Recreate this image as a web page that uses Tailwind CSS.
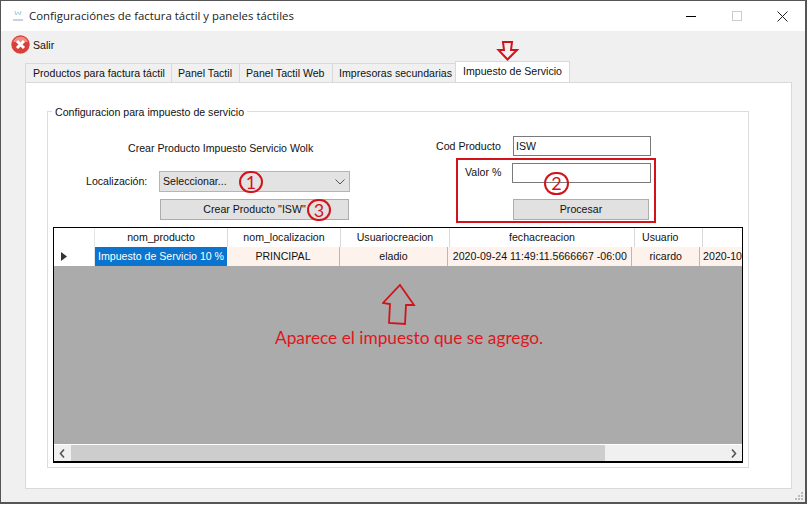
<!DOCTYPE html>
<html lang="es">
<head>
    <meta charset="UTF-8">
    <script src="https://cdn.jsdelivr.net/npm/@tailwindcss/browser@4"></script>
</head>
<body class="bg-white overflow-hidden">
    <div class="relative w-[807px] h-[504px] border border-[#555] border-r-2 border-b-2 bg-[#f0f0f0] font-['Liberation_Sans',sans-serif] text-[10.600px] text-[#111] overflow-hidden">
        <!-- title bar -->
        <div class="h-[30px] bg-white flex items-center">
            <svg class="ml-[11px] w-[12px] h-[14px]" viewBox="0 0 12 14">
                <path d="M3 2l1 4 2-3 2 3 1-4" fill="none" stroke="#a9cfe0" stroke-width="1"/>
                <path d="M1 11h10" stroke="#c5d3da" stroke-width="2"/>
            </svg>
            <span class="ml-[5px] font-['Open_Sans',sans-serif] text-[11.400px] text-[#222]">Configuraciónes de factura táctil y paneles táctiles</span>
            <div class="ml-auto flex items-center">
                <div class="w-[10px] h-px bg-black mr-[36px]"></div>
                <div class="w-[10px] h-[10px] border border-[#ccc] mr-[35px]"></div>
                <svg class="w-[11px] h-[11px] mr-[17px]" viewBox="0 0 11 11"><path d="M.5.5l10 10M10.5.5l-10 10" stroke="#222" stroke-width="1"/></svg>
            </div>
        </div>
        <!-- toolbar -->
        <div class="h-[27px] flex items-center pl-[10px]">
            <svg class="w-[19px] h-[19px]" viewBox="0 0 19 19">
                <circle cx="9.5" cy="9.5" r="9.2" fill="#d8413a"/>
                <path d="M2 7a8 8 0 0 1 15 0z" fill="#ee8d84"/>
                <path d="M6 6l7 7M13 6l-7 7" stroke="#fff" stroke-width="3"/>
            </svg>
            <span class="ml-[3px] pt-[2px]">Salir</span>
        </div>
        <!-- tabs -->
        <div class="flex items-end ml-[24px] mt-[5px] h-[19px] relative z-10">
            <div class="h-[19px] px-[7px] pt-[2px] w-[147px] bg-[#f0f0f0] border border-[#d9d9d9] border-b-0 flex items-center whitespace-nowrap">Productos para factura táctil</div>
            <div class="h-[19px] w-[68px] pl-[6px] pt-[2px] border border-l-0 border-[#d9d9d9] border-b-0 flex items-center whitespace-nowrap">Panel Tactil</div>
            <div class="h-[19px] w-[93px] pl-[6px] pt-[2px] border border-l-0 border-[#d9d9d9] border-b-0 flex items-center whitespace-nowrap">Panel Tactil Web</div>
            <div class="h-[19px] w-[123px] pl-[6px] pt-[2px] border border-l-0 border-[#d9d9d9] border-b-0 flex items-center whitespace-nowrap">Impresoras secundarias</div>
            <div class="h-[21px] w-[115px] -ml-px pl-[7px] pb-[1px] bg-white border border-[#d9d9d9] border-b-0 flex items-center whitespace-nowrap">Impuesto de Servicio</div>
        </div>
        <!-- tab panel -->
        <div class="ml-[24px] w-[767px] h-[407px] bg-white border border-[#d9d9d9] pt-[28px] pl-[21px]">
            <div class="relative w-[702px] h-[357px] border border-[#dcdcdc] pl-[4px]">
                <span class="absolute left-[4px] -top-[7px] bg-white px-[3px]">Configuracion para impuesto de servicio</span>
                <div class="flex h-[115px]">
                    <!-- left column -->
                    <div class="w-[298px] shrink-0 pt-[29px]">
                        <div class="pl-[76px] h-[14px] leading-[14px] whitespace-nowrap">Crear Producto Impuesto Servicio Wolk</div>
                        <div class="flex items-center mt-[16px]">
                            <span class="pl-[34px] w-[107px] whitespace-nowrap">Localización:</span>
                            <div class="w-[191px] h-[21px] bg-[#e3e3e3] border border-[#b5b5b5] flex items-center justify-between pl-[3px] pr-[4px]">
                                <span>Seleccionar...</span>
                                <svg class="w-[10px] h-[6px]" viewBox="0 0 10 6"><path d="M.5.5L5 5 9.5.5" fill="none" stroke="#555" stroke-width="1"/></svg>
                            </div>
                        </div>
                        <div class="ml-[108px] mt-[7px] w-[189px] h-[21px] bg-[#e1e1e1] border border-[#adadad] flex items-center justify-center">Crear Producto "ISW"</div>
                    </div>
                    <!-- right column -->
                    <div class="ml-[86px] pt-[24px] w-[220px] relative">
                        <div class="flex items-center h-[20px]">
                            <span class="w-[77px] pt-[1px] whitespace-nowrap">Cod Producto</span>
                            <div class="w-[138px] h-[20px] border border-[#7a7a7a] bg-white pl-[2px] leading-[18px]">ISW</div>
                        </div>
                        <div class="ml-[20px] mt-[2px] w-[200px] h-[65px] border-2 border-[#d3131b] relative pt-[3px]">
                            <div class="flex">
                                <span class="pl-[7px] w-[54px] pt-[2px] whitespace-nowrap">Valor %</span>
                                <div class="w-[139px] h-[20px] border border-[#7a7a7a] bg-white"></div>
                            </div>
                            <div class="ml-[55px] mt-[16px] w-[136px] h-[21px] bg-[#e1e1e1] border border-[#adadad] flex items-center justify-center">Procesar</div>
                        </div>
                    </div>
                </div>
                <!-- data grid -->
                <div class="ml-[1px] w-[690px] h-[236px] border border-b-2 border-black bg-[#ababab] flex flex-col overflow-hidden">
                    <div class="flex h-[19px] bg-white shrink-0 whitespace-nowrap">
                        <div class="w-[41px] border-r border-[#e5e5e5]"></div>
                        <div class="w-[133px] border-r border-[#d9d9d9] flex items-center justify-center">nom_producto</div>
                        <div class="w-[113px] border-r border-[#d9d9d9] flex items-center justify-center">nom_localizacion</div>
                        <div class="w-[109px] border-r border-[#d9d9d9] flex items-center justify-center">Usuariocreacion</div>
                        <div class="w-[185px] border-r border-[#d9d9d9] flex items-center justify-center">fechacreacion</div>
                        <div class="w-[68px] border-r border-[#d9d9d9] pl-[7px] flex items-center">Usuario</div>
                    </div>
                    <div class="flex h-[19px] shrink-0 whitespace-nowrap bg-[#fdf3ec] overflow-hidden">
                        <div class="w-[41px] bg-white flex items-center pl-[7px] border-r border-[#e5e5e5]">
                            <svg class="w-[6px] h-[9px]" viewBox="0 0 6 9"><path d="M0 0l6 4.5L0 9z" fill="#333"/></svg>
                        </div>
                        <div class="w-[133px] bg-[#0a74cf] text-white flex items-center justify-center">Impuesto de Servicio 10 %</div>
                        <div class="w-[113px] border-r border-[#b8b8b8] flex items-center justify-center">PRINCIPAL</div>
                        <div class="w-[109px] border-r border-[#b8b8b8] flex items-center justify-center">eladio</div>
                        <div class="w-[185px] border-r border-[#b8b8b8] flex items-center justify-center">2020-09-24 11:49:11.5666667 -06:00</div>
                        <div class="w-[68px] border-r border-[#b8b8b8] flex items-center justify-center">ricardo</div>
                        <div class="pl-[3px] flex items-center">2020-10</div>
                    </div>
                    <div class="flex-1"></div>
                    <!-- scrollbar -->
                    <div class="h-[17px] shrink-0 bg-[#f0f0f0] border-t border-white flex items-center relative">
                        <svg class="absolute left-[5px] w-[6px] h-[9px]" viewBox="0 0 6 9"><path d="M5 .5L1.5 4.5 5 8.5" fill="none" stroke="#555" stroke-width="1.6"/></svg>
                        <div class="ml-[17px] w-[534px] h-[16px] bg-[#cdcdcd]"></div>
                        <svg class="absolute right-[5px] w-[6px] h-[9px]" viewBox="0 0 6 9"><path d="M1 .5L4.5 4.5 1 8.5" fill="none" stroke="#555" stroke-width="1.6"/></svg>
                    </div>
                </div>
            </div>
        </div>
        <!-- resize grip -->
        <svg class="absolute right-[1px] bottom-[1px] w-[10px] h-[10px]" viewBox="0 0 10 10"><path d="M7 1h2v2H7zM4 4h2v2H4zM7 4h2v2H7zM1 7h2v2H1zM4 7h2v2H4zM7 7h2v2H7z" fill="#bbb"/></svg>

        <!-- annotations drawn on top of the screenshot -->
        <svg class="absolute left-[495px] top-[39px] w-[24px] h-[21px]" viewBox="0 0 24 21"><path d="M7 2h9l-1 8h6l-9.500 9.500L2.500 10H8z" fill="none" stroke="#d3131b" stroke-width="2"/></svg>
        <svg class="absolute left-[381px] top-[282px] w-[36px] h-[44px]" viewBox="0 0 36 44"><path d="M18 2L32 22H24L23 41 7 40 8 21 1 20z" fill="none" stroke="#d3131b" stroke-width="1.800"/></svg>
        <div class="absolute left-[274px] top-[327px] font-['Lato',sans-serif] text-[17.300px] leading-[20px] text-[#e0161e] whitespace-nowrap">Aparece el impuesto que se agrego.</div>
        <div class="absolute left-[238px] top-[170px] w-[24px] h-[22px] rounded-full border-2 border-[#d3131b] font-['Lato',sans-serif] text-[18px] leading-[18px] text-center text-[#d3131b]">1</div>
        <div class="absolute left-[306px] top-[198px] w-[24px] h-[22px] rounded-full border-2 border-[#d3131b] font-['Lato',sans-serif] text-[18px] leading-[18px] text-center text-[#d3131b]">3</div>
        <div class="absolute left-[543px] top-[171px] w-[25px] h-[23px] rounded-full border-2 border-[#d3131b] font-['Lato',sans-serif] text-[18px] leading-[19px] text-center text-[#d3131b]">2</div>
    </div>
</body>
</html>
